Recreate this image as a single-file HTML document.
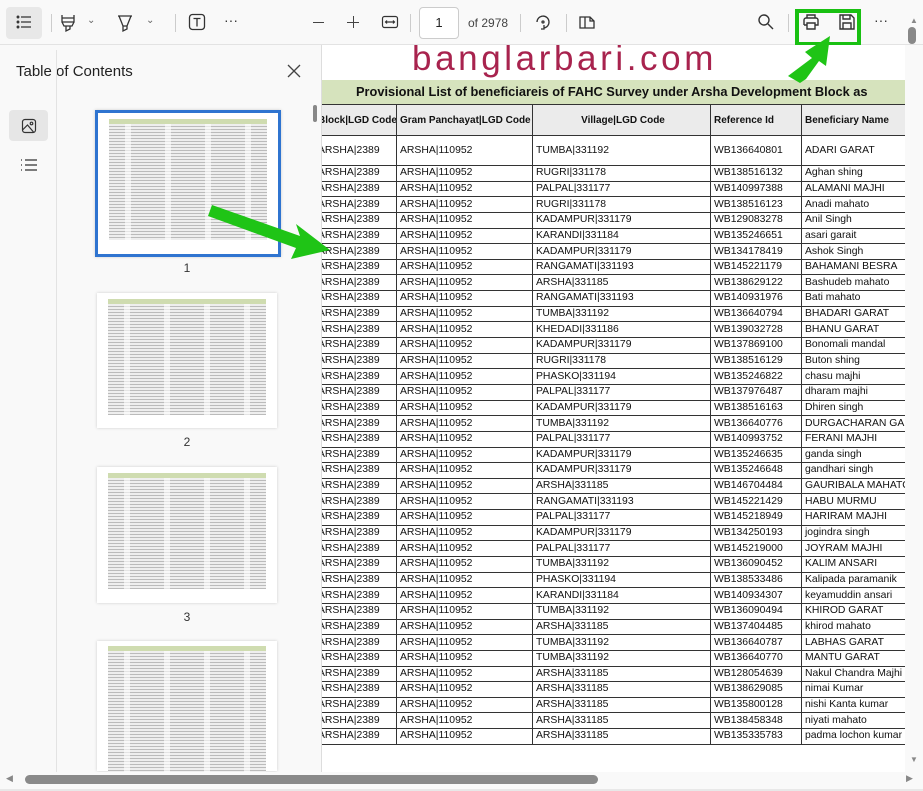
<!DOCTYPE html>
<html><head><meta charset="utf-8">
<style>
*{margin:0;padding:0;box-sizing:border-box}
body{width:923px;height:791px;overflow:hidden;background:#fff;font-family:"Liberation Sans",sans-serif;position:relative;color:#222}
.tb{position:absolute;left:0;top:0;width:923px;height:45px;background:#f9f9f9;border-bottom:1px solid #e3e3e3}
.ic{position:absolute;top:12px}
.sep{position:absolute;top:14px;width:1px;height:18px;background:#ccc}
.side{position:absolute;left:0;top:45px;width:322px;height:727px;background:#f9f9f9;border-right:1px solid #ddd}
.rail{position:absolute;left:0;top:50px;width:57px;height:722px;border-right:1px solid #e3e3e3}
.thumb{position:absolute;background:#fff;box-shadow:0 0 3px rgba(0,0,0,.18)}
.thumb .in{position:absolute;left:6%;right:6%;top:8%;bottom:10%;background:repeating-linear-gradient(180deg,#eee 0 2px,#bbb 2px 3px),#eee}
.thumb .in:before{content:"";position:absolute;left:0;right:0;top:-5px;height:5px;background:#cfdcb0}
.thumb .in:after{content:"";position:absolute;inset:0;background:repeating-linear-gradient(90deg,transparent 0 16px,rgba(255,255,255,.6) 16px 22px,transparent 22px 40px)}
.lbl{position:absolute;font-size:12px;color:#333;width:20px;text-align:center}
.doc{position:absolute;left:322px;top:45px;width:583px;height:727px;background:#fff;overflow:hidden}
table{position:absolute;left:-8px;top:59px;width:597px;border-collapse:collapse;font-size:10.4px;color:#111;table-layout:fixed}
td{border:1px solid #333;padding:0 0 0 3px;height:15.65px;white-space:nowrap;overflow:hidden;line-height:14px}
th{border:1px solid #333;background:#ebebeb;height:31px;font-size:10px;font-weight:bold;text-align:left;padding-left:3px;white-space:nowrap;overflow:hidden}
tr.f td{height:30px}
</style></head><body>
<div class="tb">
 <div style="position:absolute;left:6px;top:7px;width:36px;height:32px;background:#e8e8e8;border-radius:4px"></div>
 <svg class="ic" style="left:14px" width="20" height="20" viewBox="0 0 20 20" fill="none" stroke="#333" stroke-width="1.3"><circle cx="4" cy="5" r=".8"/><circle cx="4" cy="10" r=".8"/><circle cx="4" cy="15" r=".8"/><path d="M7 5h10M7 10h10M7 15h10"/></svg>
 <div class="sep" style="left:51px"></div>
 <svg class="ic" style="left:58px" width="20" height="22" viewBox="0 0 20 22" fill="none" stroke="#333" stroke-width="1.3"><path d="M4 3v7h12V3M4 10l2 4h8l2-4M8 14v5l4-2v-3M4 6h12"/></svg>
 <span style="position:absolute;left:87px;top:15px;font-size:10px;color:#666">&#8964;</span>
 <svg class="ic" style="left:115px" width="20" height="22" viewBox="0 0 20 22" fill="none" stroke="#333" stroke-width="1.3"><path d="M3 4h14M4 4l4 10h4l4-10M8 14v5l4-2v-3"/></svg>
 <span style="position:absolute;left:146px;top:15px;font-size:10px;color:#666">&#8964;</span>
 <div class="sep" style="left:175px"></div>
 <svg class="ic" style="left:187px" width="20" height="20" viewBox="0 0 20 20" fill="none" stroke="#333" stroke-width="1.3"><rect x="2.5" y="2.5" width="15" height="15" rx="3"/><path d="M6.5 6.5h7M10 6.5v8"/></svg>
 <span style="position:absolute;left:224px;top:12px;font-size:14px;color:#333">&middot;&middot;&middot;</span>
 <div style="position:absolute;left:313px;top:22px;width:11px;height:1.3px;background:#444"></div>
 <div style="position:absolute;left:347px;top:22px;width:12px;height:1.3px;background:#444"></div><div style="position:absolute;left:352.5px;top:16px;width:1.3px;height:12px;background:#444"></div>
 <svg class="ic" style="left:380px" width="20" height="20" viewBox="0 0 20 20" fill="none" stroke="#333" stroke-width="1.2"><rect x="2.5" y="4.5" width="15" height="11" rx="2"/><path d="M5.5 10h9M7 8.5 5.5 10 7 11.5M13 8.5l1.5 1.5L13 11.5"/></svg>
 <div class="sep" style="left:410px"></div>
 <div style="position:absolute;left:419px;top:7px;width:40px;height:32px;background:#fff;border:1px solid #ccc;border-radius:4px;font-size:13px;text-align:center;line-height:30px">1</div>
 <span style="position:absolute;left:468px;top:16px;font-size:12px;color:#444">of 2978</span>
 <div class="sep" style="left:520px"></div>
 <svg class="ic" style="left:533px" width="20" height="22" viewBox="0 0 20 22" fill="none" stroke="#333" stroke-width="1.3"><path d="M4 10a6 6 0 1 1 7 6M11 13v4h-3"/><circle cx="10" cy="10" r="1"/></svg>
 <div class="sep" style="left:566px"></div>
 <svg class="ic" style="left:577px" width="20" height="20" viewBox="0 0 20 20" fill="none" stroke="#333" stroke-width="1.3"><path d="M3 5h10l4 4v7H3zM8 5v11M13 5v4h4"/></svg>
 <svg class="ic" style="left:756px" width="20" height="20" viewBox="0 0 20 20" fill="none" stroke="#333" stroke-width="1.4"><circle cx="8" cy="8" r="5"/><path d="M12 12l5 5"/></svg>
 <div class="sep" style="left:788px"></div>
 <div style="position:absolute;left:795px;top:9px;width:66px;height:37px;border:4px solid #19c012"></div>
 <svg class="ic" style="left:801px" width="20" height="20" viewBox="0 0 20 20" fill="none" stroke="#333" stroke-width="1.4"><path d="M6 6V3h8v3M3 13V8a2 2 0 0 1 2-2h10a2 2 0 0 1 2 2v5h-3M6 13H3M6 11h8v6H6z"/></svg>
 <svg class="ic" style="left:837px" width="20" height="20" viewBox="0 0 20 20" fill="none" stroke="#333" stroke-width="1.4"><path d="M3 3h11l3 3v11H3zM6 3v4h7V3M6 17v-6h8v6"/></svg>
 <span style="position:absolute;left:874px;top:12px;font-size:14px;color:#333">&middot;&middot;&middot;</span>
</div>
<div class="side">
 <div style="position:absolute;left:16px;top:18px;font-size:15px;color:#222">Table of Contents</div>
 <svg style="position:absolute;left:286px;top:18px" width="16" height="16" viewBox="0 0 16 16" stroke="#444" stroke-width="1.3"><path d="M2 2l12 12M14 2 2 14"/></svg>
</div>
<div class="rail">
 <div style="position:absolute;left:9px;top:60px;width:39px;height:31px;background:#e6e6e6;border-radius:4px"></div>
 <svg style="position:absolute;left:21px;top:68px" width="16" height="16" viewBox="0 0 16 16" fill="none" stroke="#333" stroke-width="1.2"><rect x="1.5" y="1.5" width="13" height="13" rx="2.5"/><circle cx="10.5" cy="5.5" r="1.3"/><path d="M1.5 12l5-5 6 7"/></svg>
 <svg style="position:absolute;left:20px;top:107px" width="18" height="16" viewBox="0 0 18 16" fill="none" stroke="#333" stroke-width="1.2"><path d="M1 3h1M1 8h1M1 13h1M5 3h12M5 8h12M5 13h12"/></svg>
</div>
<div style="position:absolute;left:313px;top:105px;width:4px;height:17px;background:#888;border-radius:2px"></div>
<div class="thumb" style="left:95px;top:110px;width:186px;height:147px;border:3px solid #2f74d0"><div class="in"></div></div>
<div class="lbl" style="left:177px;top:261px">1</div>
<div class="thumb" style="left:97px;top:293px;width:180px;height:135px"><div class="in"></div></div>
<div class="lbl" style="left:177px;top:435px">2</div>
<div class="thumb" style="left:97px;top:467px;width:180px;height:136px"><div class="in"></div></div>
<div class="lbl" style="left:177px;top:610px">3</div>
<div class="thumb" style="left:97px;top:641px;width:180px;height:130px"><div class="in" style="bottom:-20px"></div></div>
<div class="doc">
 <div style="position:absolute;left:90px;top:-6px;font-size:35px;line-height:40px;color:#a8234e;letter-spacing:3.6px;white-space:nowrap">banglarbari.com</div>
 <div style="position:absolute;left:0;top:35px;width:583px;height:24px;background:#d6e3bd;font-weight:bold;font-size:12.8px;line-height:24px;white-space:nowrap;padding-left:34px;color:#111">Provisional List of beneficiareis of FAHC Survey under Arsha Development Block as</div>
 <table>
 <colgroup><col style="width:82px"><col style="width:136px"><col style="width:178px"><col style="width:91px"><col style="width:110px"></colgroup>
 <tr><th>Block|LGD Code</th><th>Gram Panchayat|LGD Code</th><th style="text-align:center">Village|LGD Code</th><th>Reference Id</th><th>Beneficiary Name</th></tr>
 <tr class="f"><td>ARSHA|2389</td><td>ARSHA|110952</td><td>TUMBA|331192</td><td>WB136640801</td><td>ADARI GARAT</td></tr>
 <tr><td>ARSHA|2389</td><td>ARSHA|110952</td><td>RUGRI|331178</td><td>WB138516132</td><td>Aghan shing</td></tr>
 <tr><td>ARSHA|2389</td><td>ARSHA|110952</td><td>PALPAL|331177</td><td>WB140997388</td><td>ALAMANI MAJHI</td></tr>
 <tr><td>ARSHA|2389</td><td>ARSHA|110952</td><td>RUGRI|331178</td><td>WB138516123</td><td>Anadi mahato</td></tr>
 <tr><td>ARSHA|2389</td><td>ARSHA|110952</td><td>KADAMPUR|331179</td><td>WB129083278</td><td>Anil Singh</td></tr>
 <tr><td>ARSHA|2389</td><td>ARSHA|110952</td><td>KARANDI|331184</td><td>WB135246651</td><td>asari garait</td></tr>
 <tr><td>ARSHA|2389</td><td>ARSHA|110952</td><td>KADAMPUR|331179</td><td>WB134178419</td><td>Ashok Singh</td></tr>
 <tr><td>ARSHA|2389</td><td>ARSHA|110952</td><td>RANGAMATI|331193</td><td>WB145221179</td><td>BAHAMANI BESRA</td></tr>
 <tr><td>ARSHA|2389</td><td>ARSHA|110952</td><td>ARSHA|331185</td><td>WB138629122</td><td>Bashudeb mahato</td></tr>
 <tr><td>ARSHA|2389</td><td>ARSHA|110952</td><td>RANGAMATI|331193</td><td>WB140931976</td><td>Bati mahato</td></tr>
 <tr><td>ARSHA|2389</td><td>ARSHA|110952</td><td>TUMBA|331192</td><td>WB136640794</td><td>BHADARI GARAT</td></tr>
 <tr><td>ARSHA|2389</td><td>ARSHA|110952</td><td>KHEDADI|331186</td><td>WB139032728</td><td>BHANU GARAT</td></tr>
 <tr><td>ARSHA|2389</td><td>ARSHA|110952</td><td>KADAMPUR|331179</td><td>WB137869100</td><td>Bonomali mandal</td></tr>
 <tr><td>ARSHA|2389</td><td>ARSHA|110952</td><td>RUGRI|331178</td><td>WB138516129</td><td>Buton shing</td></tr>
 <tr><td>ARSHA|2389</td><td>ARSHA|110952</td><td>PHASKO|331194</td><td>WB135246822</td><td>chasu majhi</td></tr>
 <tr><td>ARSHA|2389</td><td>ARSHA|110952</td><td>PALPAL|331177</td><td>WB137976487</td><td>dharam majhi</td></tr>
 <tr><td>ARSHA|2389</td><td>ARSHA|110952</td><td>KADAMPUR|331179</td><td>WB138516163</td><td>Dhiren singh</td></tr>
 <tr><td>ARSHA|2389</td><td>ARSHA|110952</td><td>TUMBA|331192</td><td>WB136640776</td><td>DURGACHARAN GARAT</td></tr>
 <tr><td>ARSHA|2389</td><td>ARSHA|110952</td><td>PALPAL|331177</td><td>WB140993752</td><td>FERANI MAJHI</td></tr>
 <tr><td>ARSHA|2389</td><td>ARSHA|110952</td><td>KADAMPUR|331179</td><td>WB135246635</td><td>ganda singh</td></tr>
 <tr><td>ARSHA|2389</td><td>ARSHA|110952</td><td>KADAMPUR|331179</td><td>WB135246648</td><td>gandhari singh</td></tr>
 <tr><td>ARSHA|2389</td><td>ARSHA|110952</td><td>ARSHA|331185</td><td>WB146704484</td><td>GAURIBALA MAHATO</td></tr>
 <tr><td>ARSHA|2389</td><td>ARSHA|110952</td><td>RANGAMATI|331193</td><td>WB145221429</td><td>HABU MURMU</td></tr>
 <tr><td>ARSHA|2389</td><td>ARSHA|110952</td><td>PALPAL|331177</td><td>WB145218949</td><td>HARIRAM MAJHI</td></tr>
 <tr><td>ARSHA|2389</td><td>ARSHA|110952</td><td>KADAMPUR|331179</td><td>WB134250193</td><td>jogindra singh</td></tr>
 <tr><td>ARSHA|2389</td><td>ARSHA|110952</td><td>PALPAL|331177</td><td>WB145219000</td><td>JOYRAM MAJHI</td></tr>
 <tr><td>ARSHA|2389</td><td>ARSHA|110952</td><td>TUMBA|331192</td><td>WB136090452</td><td>KALIM ANSARI</td></tr>
 <tr><td>ARSHA|2389</td><td>ARSHA|110952</td><td>PHASKO|331194</td><td>WB138533486</td><td>Kalipada paramanik</td></tr>
 <tr><td>ARSHA|2389</td><td>ARSHA|110952</td><td>KARANDI|331184</td><td>WB140934307</td><td>keyamuddin ansari</td></tr>
 <tr><td>ARSHA|2389</td><td>ARSHA|110952</td><td>TUMBA|331192</td><td>WB136090494</td><td>KHIROD GARAT</td></tr>
 <tr><td>ARSHA|2389</td><td>ARSHA|110952</td><td>ARSHA|331185</td><td>WB137404485</td><td>khirod mahato</td></tr>
 <tr><td>ARSHA|2389</td><td>ARSHA|110952</td><td>TUMBA|331192</td><td>WB136640787</td><td>LABHAS GARAT</td></tr>
 <tr><td>ARSHA|2389</td><td>ARSHA|110952</td><td>TUMBA|331192</td><td>WB136640770</td><td>MANTU GARAT</td></tr>
 <tr><td>ARSHA|2389</td><td>ARSHA|110952</td><td>ARSHA|331185</td><td>WB128054639</td><td>Nakul Chandra Majhi</td></tr>
 <tr><td>ARSHA|2389</td><td>ARSHA|110952</td><td>ARSHA|331185</td><td>WB138629085</td><td>nimai Kumar</td></tr>
 <tr><td>ARSHA|2389</td><td>ARSHA|110952</td><td>ARSHA|331185</td><td>WB135800128</td><td>nishi Kanta kumar</td></tr>
 <tr><td>ARSHA|2389</td><td>ARSHA|110952</td><td>ARSHA|331185</td><td>WB138458348</td><td>niyati mahato</td></tr>
 <tr><td>ARSHA|2389</td><td>ARSHA|110952</td><td>ARSHA|331185</td><td>WB135335783</td><td>padma lochon kumar</td></tr>
 </table>
</div>
<div style="position:absolute;left:905px;top:45px;width:18px;height:727px;background:#f9f9f9"></div>
<div style="position:absolute;left:910px;top:16px;font-size:8px;color:#888">&#9650;</div>
<div style="position:absolute;left:908px;top:27px;width:8px;height:17px;background:#888;border-radius:4px"></div>
<div style="position:absolute;left:910px;top:755px;font-size:8px;color:#888">&#9660;</div>
<div style="position:absolute;left:0;top:772px;width:923px;height:19px;background:#f9f9f9;border-bottom:2px solid #e8e8e8"></div>
<div style="position:absolute;left:25px;top:775px;width:573px;height:9px;background:#8a8a8a;border-radius:5px"></div>
<div style="position:absolute;left:6px;top:773px;font-size:9px;color:#888">&#9664;</div>
<div style="position:absolute;left:906px;top:773px;font-size:9px;color:#888">&#9654;</div>
<svg style="position:absolute;left:0;top:0" width="923" height="791">
 <path d="M212 205 L300 236 L296 224 L330 250 L291 259 L296 248 L208 216 Z" fill="#1fc416"/>
 <path d="M800 83 L788 76 L812 58 L805 52 L830 36 L826 66 L819 61 L806 79 Z" fill="#1fc416"/>
</svg>
</body></html>
